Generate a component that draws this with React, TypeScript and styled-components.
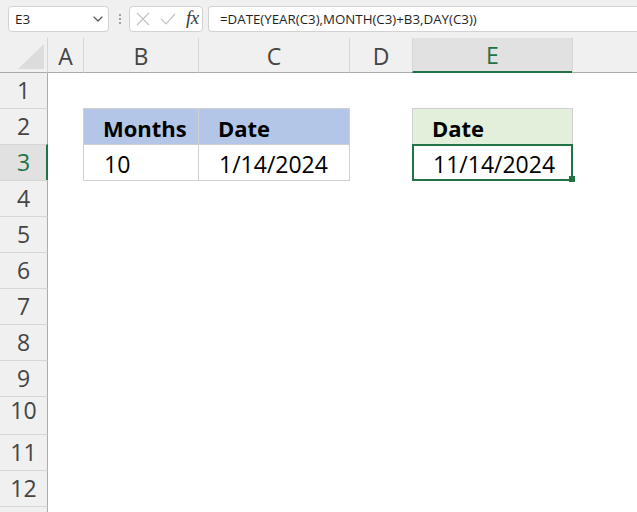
import React from 'react';
import styled, { createGlobalStyle } from 'styled-components';

const GlobalStyle = createGlobalStyle`
  html, body { margin: 0; padding: 0; background: #fff; overflow: hidden; }
  body { font-family: "Open Sans", "Noto Sans", sans-serif; }
`;

const GREEN = '#217346';

const Window = styled.div`
  width: 637px;
  height: 512px;
  display: flex;
  flex-direction: column;
  background: #f0f0f0;
  overflow: hidden;
`;

const Toolbar = styled.div`
  height: 38px;
  flex: none;
  display: flex;
  align-items: flex-start;
  box-sizing: border-box;
  padding: 6px 0 0 8px;
`;

const Box = styled.div`
  height: 26px;
  box-sizing: border-box;
  background: #fff;
  border: 1px solid #d2d2d2;
  border-radius: 4px;
  display: flex;
  align-items: center;
`;

const NameBox = styled(Box)`
  width: 101px;
  justify-content: space-between;
  padding: 0 5px 0 6px;
  font-size: 13.5px;
  color: #1f1f1f;
`;

const Dots = styled.div`
  width: 4px;
  height: 26px;
  margin: 0 7px 0 9px;
  display: flex;
  flex-direction: column;
  align-items: center;
  justify-content: center;
  gap: 2px;
  & > span {
    width: 2px;
    height: 2px;
    border-radius: 1px;
    background: #8a8a8a;
  }
`;

const ButtonsBox = styled(Box)`
  width: 74px;
  padding: 0 3px 0 5px;
  justify-content: space-between;
`;

const Fx = styled.span`
  font-family: "Liberation Serif", "DejaVu Serif", serif;
  font-style: italic;
  font-size: 19px;
  color: #3a3a3a;
  letter-spacing: -0.3px;
  margin-top: -3px;
`;

const FormulaBox = styled(Box)`
  flex: 1;
  margin-left: 5px;
  border-right: none;
  border-radius: 4px 0 0 4px;
  padding-left: 11px;
  font-size: 13.3px;
  color: #1f1f1f;
  white-space: nowrap;
`;

const Sheet = styled.div`
  flex: 1;
  display: grid;
  grid-template-columns: 48px 35px 115px 151px 63px 160px 1fr;
  grid-template-rows: 35px 35px repeat(8, 36px) 38px 36px 36px 36px;
  background: #fff;
`;

const Corner = styled.div`
  grid-row: 1;
  grid-column: 1;
  background: #f0f0f0;
  border-right: 1px solid #d6d6d6;
  border-bottom: 1px solid #ababab;
  box-sizing: border-box;
  display: flex;
  align-items: flex-end;
  justify-content: flex-end;
  padding: 0 3px 3px 0;
`;

const ColHeader = styled.div<{ $col: number; $sel?: boolean }>`
  grid-row: 1;
  grid-column: ${(p) => p.$col};
  box-sizing: border-box;
  background: ${(p) => (p.$sel ? '#e1e1e1' : '#f0f0f0')};
  border-left: ${(p) => (p.$col > 2 ? '1px solid #d6d6d6' : 'none')};
  border-bottom: ${(p) => (p.$sel ? `2px solid ${GREEN}` : '1px solid #ababab')};
  color: ${(p) => (p.$sel ? GREEN : '#444')};
  font-size: 23px;
  display: flex;
  align-items: center;
  justify-content: center;
  padding-top: 1px;
`;

const RowHeader = styled.div<{ $row: number; $sel?: boolean; $tall?: boolean }>`
  grid-column: 1;
  grid-row: ${(p) => p.$row};
  box-sizing: border-box;
  background: ${(p) => (p.$sel ? '#e1e1e1' : '#f0f0f0')};
  border-top: ${(p) => (p.$row > 2 ? '1px solid #d6d6d6' : 'none')};
  border-right: ${(p) => (p.$sel ? `2px solid ${GREEN}` : '1px solid #ababab')};
  color: ${(p) => (p.$sel ? GREEN : '#444')};
  font-size: 23px;
  display: flex;
  justify-content: center;
  align-items: ${(p) => (p.$tall ? 'flex-start' : 'center')};
  padding-top: ${(p) => (p.$tall ? '0px' : '1px')};
  padding-left: ${(p) => (p.$sel ? '1px' : '0')};
  line-height: 1.2;
`;

type Fill = 'blue' | 'green' | 'none';

const Cell = styled.div<{ $col: number; $row: number; $fill?: Fill; $bold?: boolean }>`
  grid-column: ${(p) => p.$col};
  grid-row: ${(p) => p.$row};
  position: relative;
  box-sizing: border-box;
  margin: 0 -1px -1px 0;
  border: 1px solid #d0d0d0;
  background: ${(p) => (p.$fill === 'blue' ? '#b4c6e7' : p.$fill === 'green' ? '#e2efda' : '#fff')};
  font-size: ${(p) => (p.$bold ? '22px' : '23px')};
  font-weight: ${(p) => (p.$bold ? 700 : 400)};
  color: #000;
  display: flex;
  align-items: center;
  padding: 2px 0 0 ${(p) => (p.$bold ? '19px' : '20px')};
  white-space: nowrap;
`;

const Selection = styled.div`
  position: absolute;
  inset: -1px;
  border: 2px solid ${GREEN};
  pointer-events: none;
`;

const FillHandle = styled.div`
  position: absolute;
  right: -4px;
  bottom: -3px;
  width: 6px;
  height: 6px;
  background: ${GREEN};
`;

const Chevron = () => (
  <svg width="10" height="6" viewBox="0 0 10 6" fill="none">
    <path d="M1 1 L5 5 L9 1" stroke="#555" strokeWidth="1.2" strokeLinecap="round" strokeLinejoin="round" />
  </svg>
);

const CrossIcon = () => (
  <svg width="16" height="16" viewBox="0 0 16 16" fill="none">
    <path d="M2 2 L14 14 M14 2 L2 14" stroke="#c2c2c2" strokeWidth="1.2" />
  </svg>
);

const CheckIcon = () => (
  <svg width="16" height="16" viewBox="0 0 16 16" fill="none">
    <path d="M1 8 L6 13 L15 3" stroke="#c2c2c2" strokeWidth="1.2" />
  </svg>
);

const CornerTriangle = () => (
  <svg width="26" height="25" viewBox="0 0 26 25">
    <polygon points="26,0 26,25 0,25" fill="#dcdcdc" />
  </svg>
);

const columns = ['A', 'B', 'C', 'D', 'E', ''];
const rows = [1, 2, 3, 4, 5, 6, 7, 8, 9, 10, 11, 12, 13];

export default function App() {
  return (
    <Window>
      <GlobalStyle />
      <Toolbar>
        <NameBox>
          <span>E3</span>
          <Chevron />
        </NameBox>
        <Dots>
          <span />
          <span />
          <span />
        </Dots>
        <ButtonsBox>
          <CrossIcon />
          <CheckIcon />
          <Fx>fx</Fx>
        </ButtonsBox>
        <FormulaBox>=DATE(YEAR(C3),MONTH(C3)+B3,DAY(C3))</FormulaBox>
      </Toolbar>
      <Sheet>
        <Corner>
          <CornerTriangle />
        </Corner>
        {columns.map((c, i) => (
          <ColHeader key={i} $col={i + 2} $sel={c === 'E'}>
            {c}
          </ColHeader>
        ))}
        {rows.map((r) => (
          <RowHeader key={r} $row={r + 1} $sel={r === 3} $tall={r === 10}>
            {r < 13 ? r : ''}
          </RowHeader>
        ))}
        <Cell $col={3} $row={3} $fill="blue" $bold>Months</Cell>
        <Cell $col={4} $row={3} $fill="blue" $bold>Date</Cell>
        <Cell $col={3} $row={4}>10</Cell>
        <Cell $col={4} $row={4}>1/14/2024</Cell>
        <Cell $col={6} $row={3} $fill="green" $bold>Date</Cell>
        <Cell $col={6} $row={4}>
          11/14/2024
          <Selection>
            <FillHandle />
          </Selection>
        </Cell>
      </Sheet>
    </Window>
  );
}
